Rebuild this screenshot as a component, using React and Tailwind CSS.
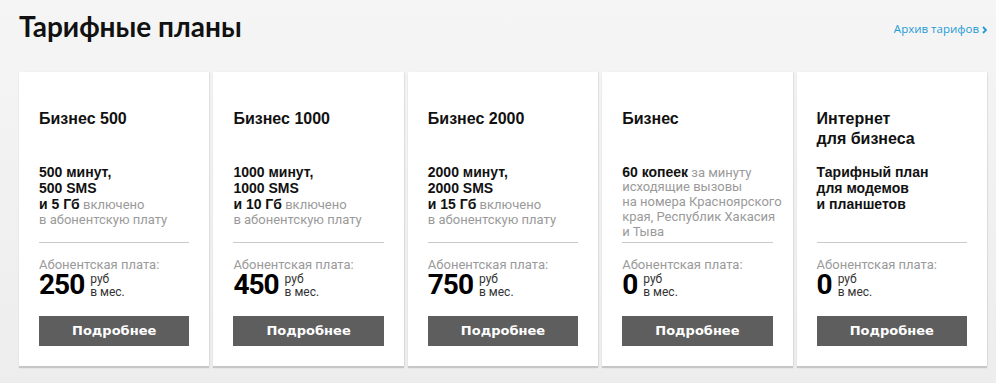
import React from 'react';

const plans = [
  {
    title: ['Бизнес 500'],
    bold: ['500 минут,', '500 SMS', 'и 5 Гб'],
    gray: ['включено', 'в абонентскую плату'],
    price: '250',
  },
  {
    title: ['Бизнес 1000'],
    bold: ['1000 минут,', '1000 SMS', 'и 10 Гб'],
    gray: ['включено', 'в абонентскую плату'],
    price: '450',
  },
  {
    title: ['Бизнес 2000'],
    bold: ['2000 минут,', '2000 SMS', 'и 15 Гб'],
    gray: ['включено', 'в абонентскую плату'],
    price: '750',
  },
  {
    title: ['Бизнес'],
    bold: ['60 копеек'],
    gray: ['за минуту', 'исходящие вызовы', 'на номера Красноярского', 'края, Республик Хакасия', 'и Тыва'],
    price: '0',
    tight: true,
  },
  {
    title: ['Интернет', 'для бизнеса'],
    bold: ['Тарифный план', 'для модемов', 'и планшетов'],
    gray: [],
    price: '0',
  },
];

function Features({ plan }) {
  const lastBold = plan.bold.length - 1;
  const [inline, ...rest] = plan.gray;
  return (
    <div className="h-[79px]">
      {plan.bold.map((line, i) => (
        <div key={i} className="h-[16px] leading-[16px] whitespace-nowrap">
          <span className="font-['Liberation_Sans',Arial,sans-serif] font-bold text-[14px] text-[#111]">{line}</span>
          {i === lastBold && inline && (
            <span className="font-['Roboto',sans-serif] text-[13px] text-[#9a9a9a]"> {inline}</span>
          )}
        </div>
      ))}
      {rest.map((line, i) => (
        <div
          key={i}
          className={`${plan.tight ? 'h-[15px] leading-[15px]' : 'h-[17px] leading-[17px]'} whitespace-nowrap font-['Roboto',sans-serif] text-[13px] text-[#9a9a9a]`}
        >
          {line}
        </div>
      ))}
    </div>
  );
}

function PlanCard({ plan }) {
  return (
    <div className="min-w-0 bg-white px-[20px] pt-[37px] pb-[20px] shadow-[0_2px_1px_rgba(0,0,0,0.16),1px_0_1px_rgba(0,0,0,0.05)]">
      <div className="h-[54px] font-['Liberation_Sans',Arial,sans-serif] font-bold text-[16px] leading-[20px] text-[#111]">
        {plan.title.map((t, i) => (
          <div key={i}>{t}</div>
        ))}
      </div>
      <Features plan={plan} />
      <div className="h-px bg-[#c9c9c9]" />
      <div className="mt-[14px] font-['Roboto',sans-serif] text-[13px] leading-[16px] text-[#9a9a9a]">
        Абонентская плата:
      </div>
      <div className="flex items-start">
        <span className="font-['Roboto',sans-serif] font-bold text-[28px] leading-[24px] tracking-[-1px] text-black">
          {plan.price}
        </span>
        <div className="ml-[6px] font-['Roboto',sans-serif] text-[12px] leading-[13px] text-[#333]">
          <div>руб</div>
          <div>в мес.</div>
        </div>
      </div>
      <button className="mt-[17px] w-full h-[30px] bg-[#5e5e5e] text-white font-['DejaVu_Sans',Verdana,sans-serif] font-bold text-[13px]">
        Подробнее
      </button>
    </div>
  );
}

export default function App() {
  return (
    <div className="min-h-[383px] bg-gradient-to-b from-[#f5f5f5] to-[#ededed] pl-[19px] pr-[9px] pt-[12px]">
      <div className="flex justify-between items-start">
        <h1 className="font-['Lato','Open_Sans',sans-serif] font-bold text-[28px] leading-[28px] text-[#111]">
          Тарифные планы
        </h1>
        <a className="mt-[9px] flex items-center gap-[3px] font-['Open_Sans',sans-serif] text-[11.5px] leading-[16px] text-[#1e9bd7]">
          Архив тарифов
          <svg width="5" height="8" viewBox="0 0 5 8" className="mt-[1px]">
            <path d="M1 1 L4 4 L1 7" stroke="#1e9bd7" strokeWidth="1.8" fill="none" />
          </svg>
        </a>
      </div>
      <div className="mt-[32px] grid grid-cols-5 gap-[4px]">
        {plans.map((p, i) => (
          <PlanCard key={i} plan={p} />
        ))}
      </div>
    </div>
  );
}
